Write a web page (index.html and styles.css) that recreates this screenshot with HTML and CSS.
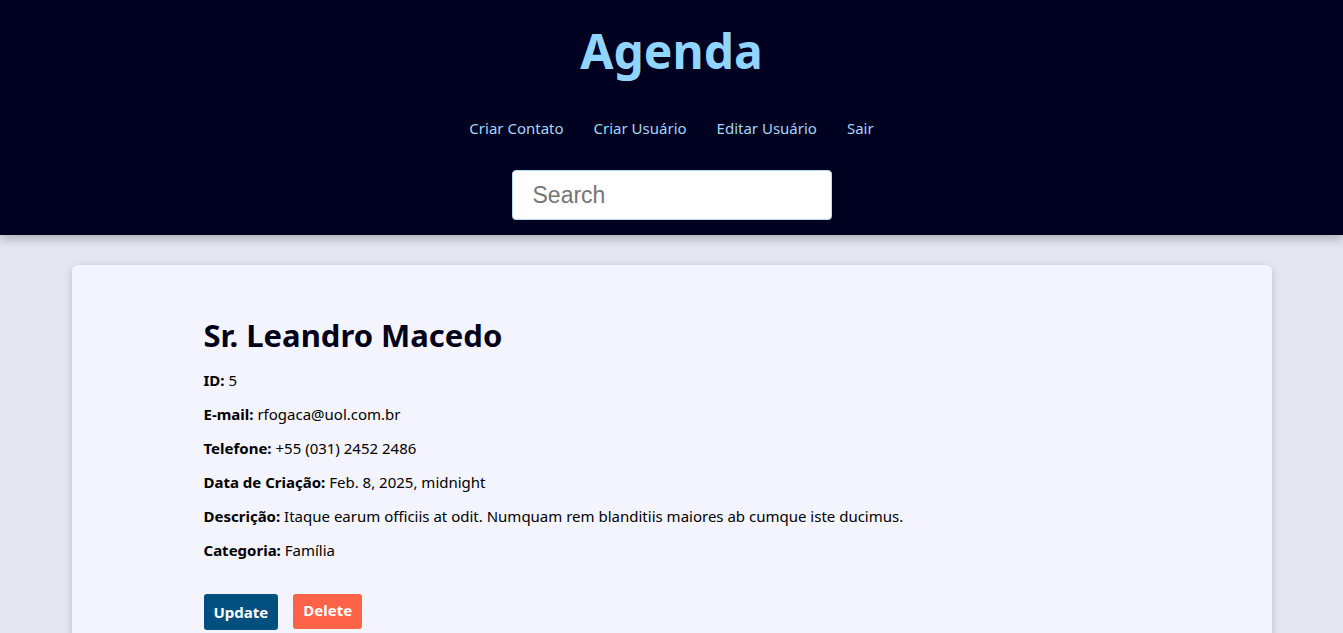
FILE: index.html
```html
<!DOCTYPE html>
<html lang="pt-BR">
<head>
<meta charset="utf-8">
<title>Agenda</title>
<link rel="stylesheet" href="styles.css">
</head>
<body>
<header class="site-header">
  <h1 class="brand">Agenda</h1>
  <nav class="nav">
    <a href="#">Criar Contato</a>
    <a href="#">Criar Usuário</a>
    <a href="#">Editar Usuário</a>
    <a href="#">Sair</a>
  </nav>
  <form class="search-form">
    <input class="search" type="text" placeholder="Search">
  </form>
</header>
<main class="card">
  <div class="contact">
    <h2 class="name">Sr. Leandro Macedo</h2>
    <p><strong>ID:</strong> 5</p>
    <p><strong>E-mail:</strong> rfogaca@uol.com.br</p>
    <p><strong>Telefone:</strong> +55 (031) 2452 2486</p>
    <p><strong>Data de Criação:</strong> Feb. 8, 2025, midnight</p>
    <p><strong>Descrição:</strong> Itaque earum officiis at odit. Numquam rem blanditiis maiores ab cumque iste ducimus.</p>
    <p><strong>Categoria:</strong> Família</p>
    <div class="actions">
      <a class="btn btn-update" href="#">Update</a>
      <a class="btn btn-delete" href="#">Delete</a>
    </div>
  </div>
</main>
</body>
</html>
```
FILE: styles.css
```css
* { box-sizing: border-box; }
html, body { margin: 0; padding: 0; }
body {
  background: #e6e6f2;
  font-family: "Noto Sans", "Open Sans", sans-serif;
  color: #000;
}
.site-header {
  background: #000020;
  height: 235px;
  display: flex;
  flex-direction: column;
  align-items: center;
  box-shadow: 0 4px 10px rgba(0,0,20,0.25);
  position: relative;
}
.brand {
  margin: 18px 0 0;
  font-size: 48px;
  line-height: 66px;
  font-weight: 700;
  color: #90d5ff;
}
.nav {
  display: flex;
  gap: 30px;
  margin-top: 33px;
}
.nav a {
  color: #a4d8f7;
  text-decoration: none;
  font-size: 15px;
  line-height: 22px;
}
.search-form { margin-top: 31px; }
.search {
  width: 320px;
  height: 50px;
  border: 1px solid #b8dcf0;
  border-radius: 4px;
  background: #fff;
  padding: 0 20px;
  font-family: "Liberation Sans", Arial, sans-serif;
  font-size: 23px;
  color: #333;
  outline: none;
}
.search::placeholder { color: #757575; }
.card {
  max-width: 1200px;
  margin: 30px auto 0;
  background: #f4f4fe;
  border-radius: 6px;
  box-shadow: 0 2px 8px rgba(0,0,30,0.18);
  padding: 48px 132px 40px;
}
.name {
  margin: 0 0 13px;
  font-size: 31px;
  line-height: 44px;
  font-weight: 700;
  color: #000018;
}
.contact p {
  margin: 0 0 14px;
  font-size: 15px;
  line-height: 20px;
}
.actions {
  display: flex;
  align-items: flex-start;
  gap: 15px;
  margin-top: 34px;
}
.btn {
  display: inline-block;
  padding: 0 10px;
  height: 36px;
  line-height: 36px;
  border-radius: 3px;
  color: #fff;
  font-weight: 700;
  font-size: 15px;
  text-decoration: none;
}
.btn-update { background: #00507f; }
.btn-delete { background: #ff6347; height: 35px; line-height: 32px; }
```
